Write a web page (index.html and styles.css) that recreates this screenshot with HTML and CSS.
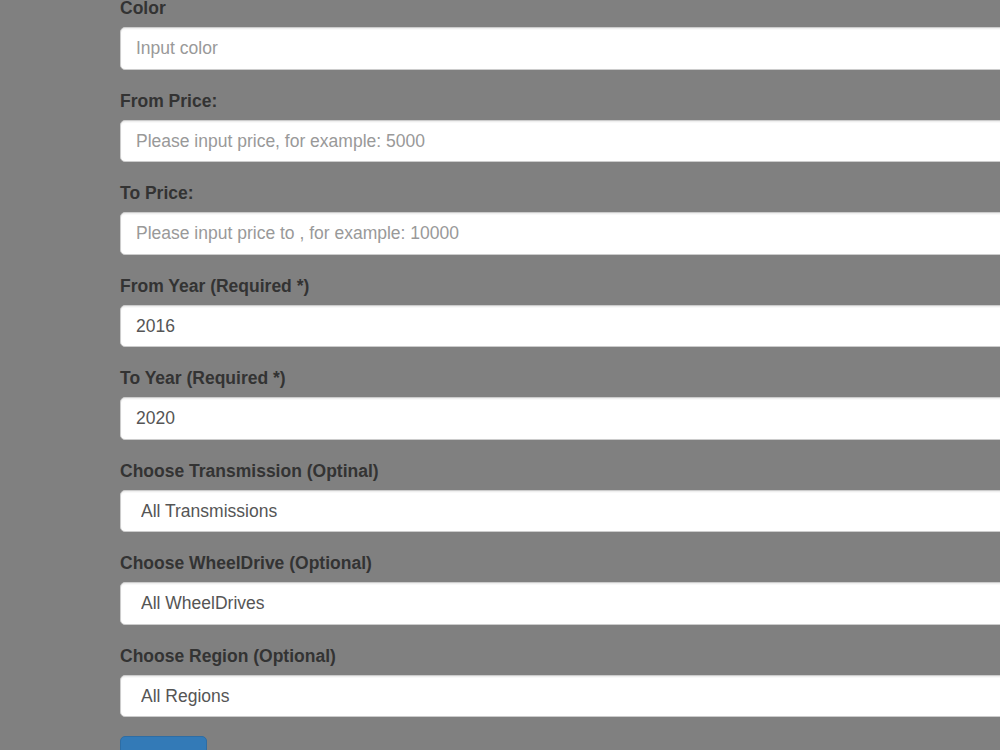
FILE: index.html
```html
<!DOCTYPE html>
<html lang="en">
<head>
    <meta charset="UTF-8">
    <meta name="viewport" content="width=device-width, initial-scale=1.0">
    <title>Car Search</title>
    <link rel="stylesheet" href="styles.css">
</head>
<body>
    <form id="search-form">
        <div class="form-group">
            <label for="color">Color</label>
            <input type="text" id="color" class="form-control" placeholder="Input color">
        </div>
        <div class="form-group">
            <label for="price-from">From Price:</label>
            <input type="text" id="price-from" class="form-control" placeholder="Please input price, for example: 5000">
        </div>
        <div class="form-group">
            <label for="price-to">To Price:</label>
            <input type="text" id="price-to" class="form-control" placeholder="Please input price to , for example: 10000">
        </div>
        <div class="form-group">
            <label for="year-from">From Year (Required *)</label>
            <input type="text" id="year-from" class="form-control" value="2016">
        </div>
        <div class="form-group">
            <label for="year-to">To Year (Required *)</label>
            <input type="text" id="year-to" class="form-control" value="2020">
        </div>
        <div class="form-group">
            <label for="transmission">Choose Transmission (Optinal)</label>
            <select id="transmission" class="form-control">
                <option>All Transmissions</option>
                <option>Automatic</option>
                <option>Manual</option>
            </select>
        </div>
        <div class="form-group">
            <label for="wheeldrive">Choose WheelDrive (Optional)</label>
            <select id="wheeldrive" class="form-control">
                <option>All WheelDrives</option>
                <option>FWD</option>
                <option>RWD</option>
                <option>AWD</option>
            </select>
        </div>
        <div class="form-group">
            <label for="region">Choose Region (Optional)</label>
            <select id="region" class="form-control">
                <option>All Regions</option>
            </select>
        </div>
        <button type="submit" class="btn btn-primary">Search</button>
    </form>
</body>
</html>
```

FILE: styles.css
```css
html, body{
    margin: 0;
    padding: 0;
    overflow: hidden;
}

body{
    background-color: #808080;
    font-family: "Liberation Sans", Helvetica, Arial, sans-serif;
    font-size: 17.5px;
    line-height: 1.42857;
    color: #333333;
}

#search-form{
    width: 1100px;
    margin-top: -3.75px;
    margin-left: 120px;
}

.form-group{
    margin-bottom: 18.75px;
}

label{
    display: inline-block;
    max-width: 100%;
    margin-bottom: 6.25px;
    font-weight: bold;
}

.form-control{
    display: block;
    box-sizing: border-box;
    width: 100%;
    height: 42.5px;
    padding: 7.5px 15px;
    font-family: inherit;
    font-size: 17.5px;
    line-height: 1.42857;
    color: #555555;
    background-color: #ffffff;
    border: 1.25px solid #cccccc;
    border-radius: 5px;
    box-shadow: inset 0 1.25px 1.25px rgba(0, 0, 0, 0.075);
    margin: 0;
}

.form-control::placeholder{
    color: #999999;
    opacity: 1;
}

select.form-control{
    appearance: none;
    -webkit-appearance: none;
    padding-left: 20px;
}

.btn{
    display: inline-block;
    box-sizing: border-box;
    height: 42.5px;
    padding: 10px 15px 5px;
    font-family: inherit;
    font-size: 17.5px;
    line-height: 1.42857;
    border: 1.25px solid transparent;
    border-radius: 5px;
    cursor: pointer;
}

.btn-primary{
    width: 87px;
    color: #ffffff;
    background-color: #337ab7;
    border-color: #2e6da4;
}
```
